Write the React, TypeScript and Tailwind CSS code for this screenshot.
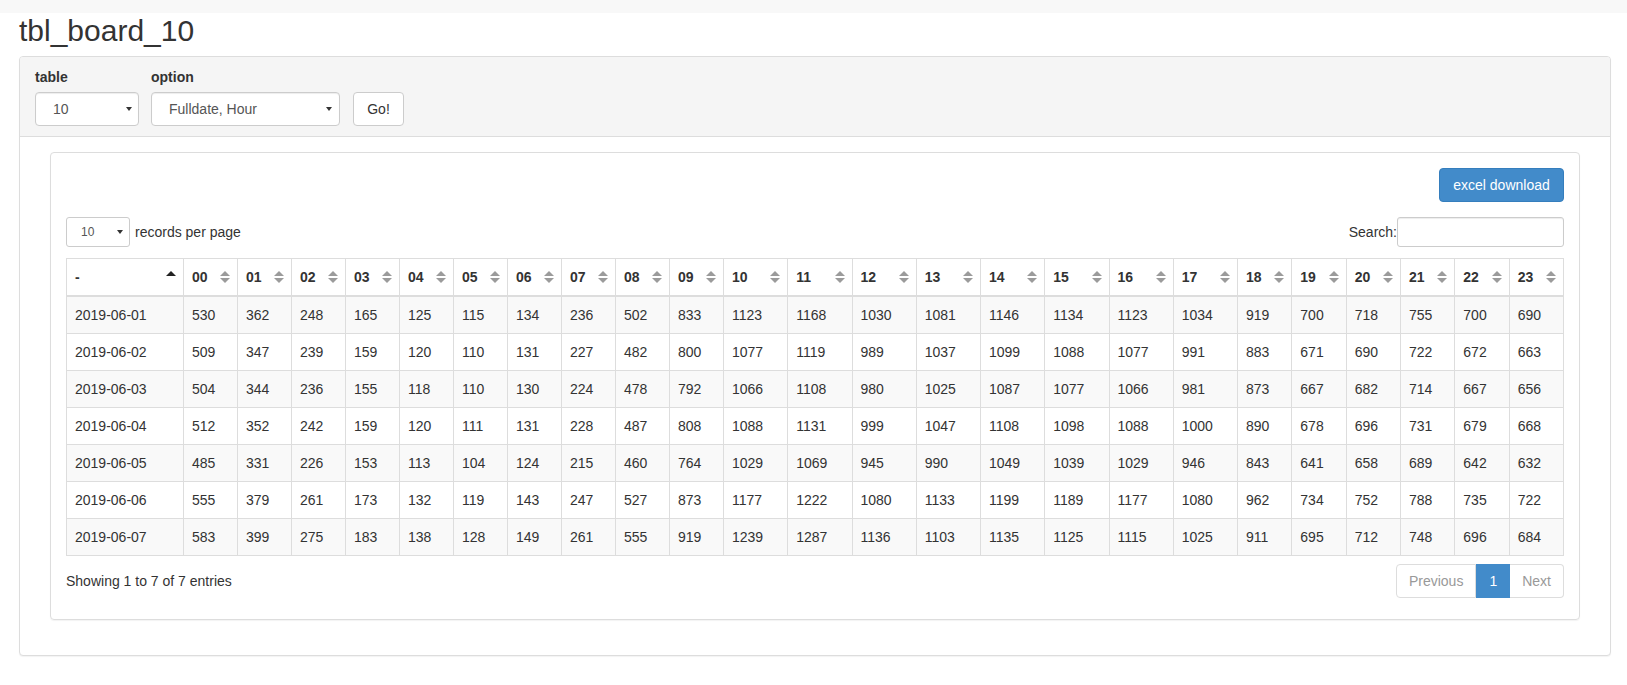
import React from 'react';

const hours = ['00','01','02','03','04','05','06','07','08','09','10','11','12','13','14','15','16','17','18','19','20','21','22','23'];

const rows: [string, number[]][] = [
  ['2019-06-01', [530,362,248,165,125,115,134,236,502,833,1123,1168,1030,1081,1146,1134,1123,1034,919,700,718,755,700,690]],
  ['2019-06-02', [509,347,239,159,120,110,131,227,482,800,1077,1119,989,1037,1099,1088,1077,991,883,671,690,722,672,663]],
  ['2019-06-03', [504,344,236,155,118,110,130,224,478,792,1066,1108,980,1025,1087,1077,1066,981,873,667,682,714,667,656]],
  ['2019-06-04', [512,352,242,159,120,111,131,228,487,808,1088,1131,999,1047,1108,1098,1088,1000,890,678,696,731,679,668]],
  ['2019-06-05', [485,331,226,153,113,104,124,215,460,764,1029,1069,945,990,1049,1039,1029,946,843,641,658,689,642,632]],
  ['2019-06-06', [555,379,261,173,132,119,143,247,527,873,1177,1222,1080,1133,1199,1189,1177,1080,962,734,752,788,735,722]],
  ['2019-06-07', [583,399,275,183,138,128,149,261,555,919,1239,1287,1136,1103,1135,1125,1115,1025,911,695,712,748,696,684]],
];

// column widths follow the auto layout of the original page
const colWidth = (h: string) => {
  const n = Number(h);
  if (n < 10) return 'w-[54px]';
  if (n <= 17) return 'w-[64.25px]';
  return '';
};

const Caret = () => (
  <svg width="6" height="4" viewBox="0 0 6 4" className="shrink-0">
    <path d="M0 0 L6 0 L3 4 Z" fill="#333" />
  </svg>
);

const SortBoth = () => (
  <svg width="10" height="12" viewBox="0 0 10 12" className="shrink-0">
    <path d="M5 0 L10 5 L0 5 Z" fill="#9b9b9b" />
    <path d="M0 7 L10 7 L5 12 Z" fill="#9b9b9b" />
  </svg>
);

const SortAsc = () => (
  <svg width="10" height="12" viewBox="0 0 10 12" className="shrink-0">
    <path d="M5 0 L10 5 L0 5 Z" fill="#222" />
  </svg>
);

const App = () => {
  return (
    <div className="min-h-screen bg-white font-['Liberation_Sans',Arial,sans-serif] text-[14px] leading-5 text-[#333]">
      <div className="h-[13px] bg-[#f8f8f8]" />
      <h2 className="pl-[19px] pt-[1px] mb-[9px] text-[30px] leading-[33px] font-normal">tbl_board_10</h2>

      <div className="ml-[19px] mr-[16px] border border-[#ddd] rounded-[4px] bg-white shadow-[0_1px_1px_rgba(0,0,0,0.05)]">
        <div className="flex items-end bg-[#f5f5f5] border-b border-[#ddd] rounded-t-[3px] px-[15px] pt-[10px] pb-[10px]">
          <div>
            <div className="font-bold mb-[5px]">table</div>
            <div className="w-[104px] h-[34px] flex items-center justify-between pl-[17px] pr-[6px] bg-white border border-[#ccc] rounded-[4px] text-[#555] shadow-[inset_0_1px_1px_rgba(0,0,0,0.075)]">
              <span>10</span>
              <Caret />
            </div>
          </div>
          <div className="ml-[12px]">
            <div className="font-bold mb-[5px]">option</div>
            <div className="w-[189px] h-[34px] flex items-center justify-between pl-[17px] pr-[7px] bg-white border border-[#ccc] rounded-[4px] text-[#555] shadow-[inset_0_1px_1px_rgba(0,0,0,0.075)]">
              <span>Fulldate, Hour</span>
              <Caret />
            </div>
          </div>
          <div className="ml-[13px] w-[51px] h-[34px] flex items-center justify-center bg-white border border-[#ccc] rounded-[4px] text-[#333]">
            Go!
          </div>
        </div>

        <div className="px-[30px] pt-[15px] pb-[15px]">
          <div className="border border-[#ddd] rounded-[4px] p-[15px] mb-[20px] shadow-[0_1px_1px_rgba(0,0,0,0.05)]">
            <div className="flex justify-end">
              <div className="w-[125px] h-[34px] flex items-center justify-center bg-[#428bca] border border-[#357ebd] rounded-[4px] text-white">
                excel download
              </div>
            </div>

            <div className="mt-[15px] flex items-center justify-between h-[30px]">
              <div className="flex items-center">
                <div className="w-[64px] h-[30px] flex items-center justify-between pl-[14px] pr-[6px] border border-[#ccc] rounded-[3px] text-[12px] text-[#555]">
                  <span>10</span>
                  <Caret />
                </div>
                <span className="ml-[5px]">records per page</span>
              </div>
              <div className="flex items-center">
                <span>Search:</span>
                <div className="w-[167px] h-[30px] border border-[#ccc] rounded-[3px] shadow-[inset_0_1px_1px_rgba(0,0,0,0.075)]" />
              </div>
            </div>

            <table className="mt-[11px] w-full table-fixed border-collapse">
              <colgroup>
                <col className="w-[117px]" />
                {hours.map((h) => (
                  <col key={h} className={colWidth(h)} />
                ))}
              </colgroup>
              <thead>
                <tr>
                  <th className="border border-[#ddd] border-b-2 pl-2 pr-[7px] py-2 text-left font-bold">
                    <div className="flex items-center justify-between">
                      <span>-</span>
                      <SortAsc />
                    </div>
                  </th>
                  {hours.map((h) => (
                    <th key={h} className="border border-[#ddd] border-b-2 pl-2 pr-[7px] py-2 text-left font-bold">
                      <div className="flex items-center justify-between">
                        <span>{h}</span>
                        <SortBoth />
                      </div>
                    </th>
                  ))}
                </tr>
              </thead>
              <tbody>
                {rows.map(([date, vals], i) => (
                  <tr key={date} className={i % 2 === 0 ? 'bg-[#f9f9f9]' : 'bg-white'}>
                    <td className="border border-[#ddd] px-2 py-2">{date}</td>
                    {vals.map((v, j) => (
                      <td key={j} className="border border-[#ddd] px-2 py-2">{v}</td>
                    ))}
                  </tr>
                ))}
              </tbody>
            </table>

            <div className="mt-[8px] mb-[6px] flex items-center justify-between">
              <span>Showing 1 to 7 of 7 entries</span>
              <div className="flex h-[34px]">
                <div className="flex items-center px-[12px] border border-[#ddd] rounded-l-[4px] text-[#999]">Previous</div>
                <div className="flex items-center px-[12px] bg-[#428bca] border border-[#428bca] text-white">1</div>
                <div className="flex items-center px-[12px] border border-[#ddd] border-l-0 rounded-r-[4px] text-[#999]">Next</div>
              </div>
            </div>
          </div>
        </div>
      </div>
    </div>
  );
};

export default App;
